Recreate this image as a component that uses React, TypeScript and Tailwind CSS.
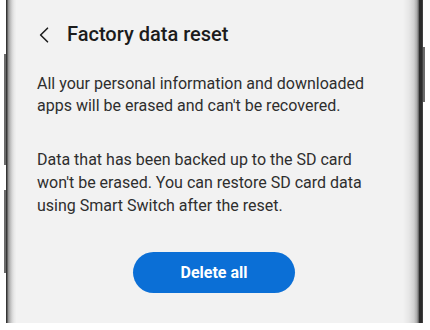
export default function App() {
  return (
    <div className="w-[430px] h-[330px] bg-white overflow-hidden font-['Roboto',sans-serif]">
      <div className="h-[323px] flex">
        {/* left side keys */}
        <div className="w-[6px] flex flex-col items-end">
          <div className="mt-[54px] h-[111px] w-[2px] bg-[#6b6b6b]" />
          <div className="mt-[25px] h-[83px] w-[2px] bg-[#6b6b6b]" />
        </div>
        {/* left bezel */}
        <div className="w-[10px] bg-[linear-gradient(to_right,#2f2f2f_0px,#3a3a3a_1px,#8c8c8c_2px,#b8b8b8_4px,#d6d6d6_6px,#e8e8e8_8px,#f0f0f0_10px)]" />

        {/* screen */}
        <div className="flex-1 bg-[#f2f2f2] pl-[21px] pr-[10px]">
          <div className="mt-[22px] flex items-center h-[25px]">
            <svg width="12" height="16" viewBox="0 0 12 16" className="ml-[1px]" fill="none">
              <path d="M9.5 1.2 2.6 8l6.9 6.8" stroke="#1d1d1d" strokeWidth="1.6" strokeLinecap="round" strokeLinejoin="round" />
            </svg>
            <h1 className="ml-[17px] text-[20px] leading-[25px] font-medium text-[#1c1c1c]">
              Factory data reset
            </h1>
          </div>

          <p className="mt-[26px] text-[16px] leading-[22px] text-[#2e2e2e]">
            All your personal information and downloaded
            <br />
            apps will be erased and can't be recovered.
          </p>

          <p className="mt-[31px] text-[16px] leading-[23px] text-[#2e2e2e]">
            Data that has been backed up to the SD card
            <br />
            won't be erased. You can restore SD card data
            <br />
            using Smart Switch after the reset.
          </p>

          <div className="mt-[35px] flex">
            <button className="ml-[96px] w-[162px] h-[41px] rounded-full bg-[#0b6fd6] text-white text-[16px] font-bold">
              Delete all
            </button>
          </div>
        </div>

        {/* right bezel */}
        <div className="w-[20px] bg-[linear-gradient(to_right,#f2f2f2_0px,#e6e6e6_6px,#cfcfcf_11px,#a8a8a8_14px,#6a6a6a_15.5px,#2c2c2c_16px,#2c2c2c_19px,#555_20px)]" />
        {/* right side key */}
        <div className="w-[7px]">
          <div className="mt-[47px] h-[55px] w-[2px] bg-[#6b6b6b]" />
        </div>
      </div>
    </div>
  );
}
